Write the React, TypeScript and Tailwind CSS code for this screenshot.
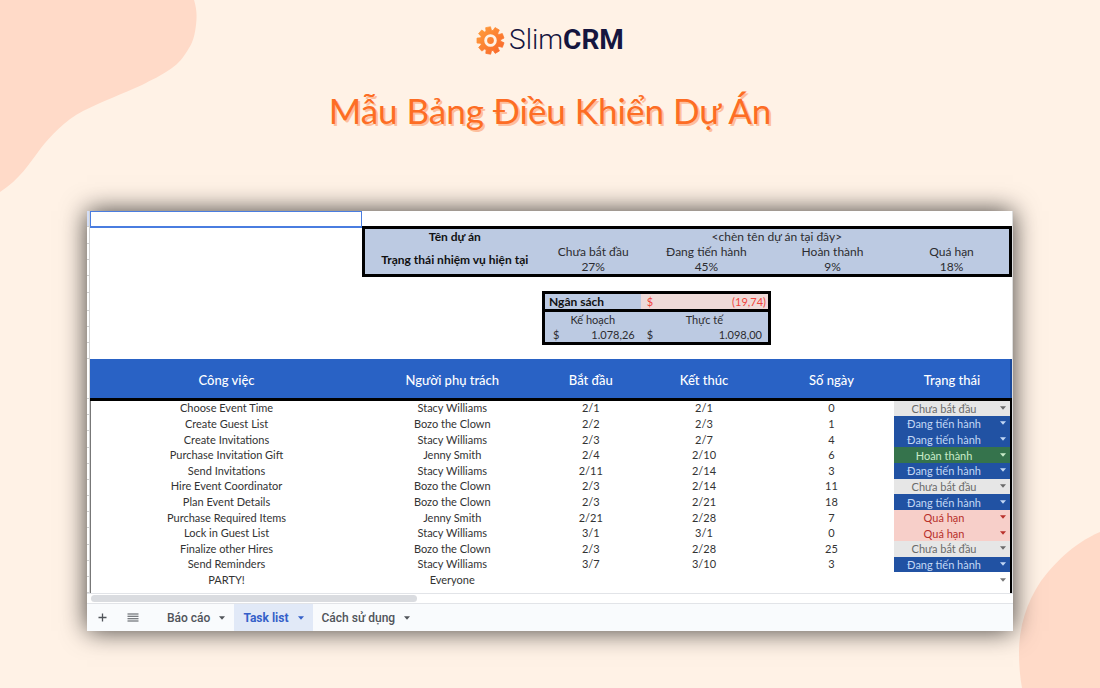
type Status = "" | "Chưa bắt đầu" | "Đang tiến hành" | "Hoàn thành" | "Quá hạn";

const STATUSES: Status[] = ["", "Chưa bắt đầu", "Đang tiến hành", "Hoàn thành", "Quá hạn"];

const STATUS_STYLE: Record<Status, string> = {
  "": "bg-white text-[#777777]",
  "Chưa bắt đầu": "bg-[#e6e6e6] text-[#6a6a6a]",
  "Đang tiến hành": "bg-[#2152a3] text-[#c3d8f5]",
  "Hoàn thành": "bg-[#35734c] text-[#c9ecc9]",
  "Quá hạn": "bg-[#f7cfc9] text-[#b8302b]",
};

const TASKS: [string, string, string, string, string, Status][] = [
  ["Choose Event Time", "Stacy Williams", "2/1", "2/1", "0", "Chưa bắt đầu"],
  ["Create Guest List", "Bozo the Clown", "2/2", "2/3", "1", "Đang tiến hành"],
  ["Create Invitations", "Stacy Williams", "2/3", "2/7", "4", "Đang tiến hành"],
  ["Purchase Invitation Gift", "Jenny Smith", "2/4", "2/10", "6", "Hoàn thành"],
  ["Send Invitations", "Stacy Williams", "2/11", "2/14", "3", "Đang tiến hành"],
  ["Hire Event Coordinator", "Bozo the Clown", "2/3", "2/14", "11", "Chưa bắt đầu"],
  ["Plan Event Details", "Bozo the Clown", "2/3", "2/21", "18", "Đang tiến hành"],
  ["Purchase Required Items", "Jenny Smith", "2/21", "2/28", "7", "Quá hạn"],
  ["Lock in Guest List", "Stacy Williams", "3/1", "3/1", "0", "Quá hạn"],
  ["Finalize other Hires", "Bozo the Clown", "2/3", "2/28", "25", "Chưa bắt đầu"],
  ["Send Reminders", "Stacy Williams", "3/7", "3/10", "3", "Đang tiến hành"],
  ["PARTY!", "Everyone", "", "", "", ""],
];

const HEADERS = ["Công việc", "Người phụ trách", "Bắt đầu", "Kết thúc", "Số ngày", "Trạng thái"];

const TOOTH_COUNT = 9;

function gearPath() {
  const points: string[] = [];
  const step = (Math.PI * 2) / TOOTH_COUNT;
  const corners: [number, number][] = [
    [10.6, -0.27],
    [14.2, -0.18],
    [14.2, 0.18],
    [10.6, 0.27],
  ];
  for (let i = 0; i < TOOTH_COUNT; i++) {
    const base = i * step - Math.PI / 2 - 0.18;
    for (const [r, offset] of corners) {
      const a = base + offset;
      points.push(`${(15 + r * Math.cos(a)).toFixed(2)} ${(15 + r * Math.sin(a)).toFixed(2)}`);
    }
  }
  return `M${points.join("L")}Z`;
}

function Logo() {
  return (
    <div className="flex items-center justify-center gap-1 text-[#15153f]">
      <svg viewBox="0 0 30 30" className="size-[29px]" aria-hidden="true">
        <defs>
          <linearGradient id="gear" x1="0" y1="0" x2="1" y2="1">
            <stop offset="0" stopColor="#ffa03c" />
            <stop offset="1" stopColor="#f9642a" />
          </linearGradient>
        </defs>
        <path d={gearPath()} fill="url(#gear)" stroke="url(#gear)" strokeWidth="0.8" strokeLinejoin="round" />
        <circle cx="15" cy="15" r="5" fill="none" stroke="#fff2e6" strokeWidth="3" />
      </svg>
      <span className="text-[28px] leading-8 font-light">
        Slim<b className="font-bold">CRM</b>
      </span>
    </div>
  );
}

function Caret({ className }: { className: string }) {
  return (
    <svg viewBox="0 0 6 4" className={className} aria-hidden="true">
      <path d="M0 0.3H6L3 3.7Z" fill="currentColor" />
    </svg>
  );
}

function StatusCell({ value, task }: { value: Status; task: string }) {
  return (
    <td className={`border-r-2 border-black p-0 ${STATUS_STYLE[value]}`}>
      <div className="relative">
        <select
          aria-label={`Trạng thái: ${task}`}
          defaultValue={value}
          className="block h-[15px] w-full appearance-none pr-4 text-center leading-[15px] [text-align-last:center]"
        >
          {STATUSES.map((s) => (
            <option key={s} value={s}>
              {s}
            </option>
          ))}
        </select>
        <Caret className="pointer-events-none absolute top-[5px] right-1 h-1 w-1.5" />
      </div>
    </td>
  );
}

const GUTTER = [
  "h-4 bg-[#d3def7]",
  "h-[17px]",
  "h-4",
  "h-4",
  "h-[17px]",
  "h-[18px]",
  "h-4",
  "h-4",
  "h-4",
  "h-10",
];

function RowGutter() {
  return (
    <div className="flex w-[3px] shrink-0 flex-col border-r border-[#d4d4d4]">
      {GUTTER.map((c, i) => (
        <div key={i} className={`shrink-0 border-b border-[#cfcfcf] ${c}`} />
      ))}
      {TASKS.map((t) => (
        <div key={t[0]} className="flex-1 border-b border-[#cfcfcf]" />
      ))}
    </div>
  );
}

function Summary() {
  return (
    <div className="grid grid-cols-[272fr_650fr]">
      <div />
      <table className="w-full table-fixed border-collapse border-[3px] border-black bg-[#bccae2] text-center text-xs leading-[15px] text-[#2c2c30]">
        <colgroup>
          <col className="w-[28%]" />
          <col className="w-[15%]" />
          <col className="w-[20%]" />
          <col className="w-[19%]" />
          <col className="w-[18%]" />
        </colgroup>
        <tbody>
          <tr>
            <th scope="row" className="p-0 font-bold text-[#111111]">Tên dự án</th>
            <td colSpan={4} className="p-0">&lt;chèn tên dự án tại đây&gt;</td>
          </tr>
          <tr>
            <th scope="row" rowSpan={2} className="p-0 font-bold text-[#111111]">Trạng thái nhiệm vụ hiện tại</th>
            <td className="p-0">Chưa bắt đầu</td>
            <td className="p-0">Đang tiến hành</td>
            <td className="p-0">Hoàn thành</td>
            <td className="p-0">Quá hạn</td>
          </tr>
          <tr>
            <td className="p-0">27%</td>
            <td className="p-0">45%</td>
            <td className="p-0">9%</td>
            <td className="p-0">18%</td>
          </tr>
        </tbody>
      </table>
    </div>
  );
}

function Money({ amount, className }: { amount: string; className: string }) {
  return (
    <div className={`flex justify-between ${className}`}>
      <span>$</span>
      <span>{amount}</span>
    </div>
  );
}

function Budget() {
  return (
    <div className="grid grid-cols-[452fr_229fr_241fr]">
      <div />
      <table className="w-full table-fixed border-collapse border-[3px] border-black bg-[#bccae2] text-[11px] leading-[15px] text-[#2c2c30]">
        <colgroup>
          <col className="w-[43%]" />
          <col className="w-[57%]" />
        </colgroup>
        <tbody>
          <tr className="border-b-[3px] border-black">
            <th scope="row" className="p-0 pl-1 text-left text-xs leading-[15px] font-bold text-[#111111]">Ngân sách</th>
            <td className="bg-[#eedad8] p-0 text-[#f0453c]">
              <Money amount="(19,74)" className="pr-0.5 pl-1.5" />
            </td>
          </tr>
          <tr className="text-center">
            <td className="p-0">Kế hoạch</td>
            <td className="p-0">Thực tế</td>
          </tr>
          <tr>
            <td className="p-0">
              <Money amount="1.078,26" className="pr-1.5 pl-2" />
            </td>
            <td className="p-0">
              <Money amount="1.098,00" className="pr-1.5 pl-1.5" />
            </td>
          </tr>
        </tbody>
      </table>
    </div>
  );
}

function TaskTable() {
  return (
    <table className="h-[229px] w-full table-fixed border-collapse text-center text-[11px] leading-[14px] text-[#333333]">
      <colgroup>
        <col className="w-[29.5%]" />
        <col className="w-[19.6%]" />
        <col className="w-[10.5%]" />
        <col className="w-[14.1%]" />
        <col className="w-[13.6%]" />
        <col className="w-[12.7%]" />
      </colgroup>
      <thead>
        <tr className="h-10 border-b-[3px] border-black bg-[#2962c5] text-[13px] text-white">
          {HEADERS.map((h) => (
            <th
              key={h}
              scope="col"
              className="p-0 pt-1 font-medium first:border-l first:border-l-[#2962c5] last:border-r-2 last:border-r-[#1b4a9c]"
            >
              {h}
            </th>
          ))}
        </tr>
      </thead>
      <tbody>
        {TASKS.map(([task, owner, start, end, days, status]) => (
          <tr key={task}>
            <td className="border-l border-[#777777] p-0">{task}</td>
            <td className="p-0">{owner}</td>
            <td className="p-0">{start}</td>
            <td className="p-0">{end}</td>
            <td className="p-0">{days}</td>
            <StatusCell value={status} task={task} />
          </tr>
        ))}
      </tbody>
    </table>
  );
}

function SheetTab({ label, active = false }: { label: string; active?: boolean }) {
  return (
    <button
      type="button"
      className={`flex items-center gap-[9px] px-[9px] ${active ? "bg-[#e1e9f7] font-bold text-[#3560c9]" : "font-medium text-[#50545a]"}`}
    >
      {label}
      <Caret className="h-1 w-1.5" />
    </button>
  );
}

function TabBar() {
  return (
    <div className="flex h-7 border-t border-[#e2e4e8] bg-[#f9fbfd] font-['Roboto','Noto_Sans',sans-serif] text-xs text-[#50545a]">
      <button type="button" aria-label="Thêm trang tính" className="flex w-[30px] items-center justify-center">
        <svg viewBox="0 0 9 9" className="size-[9px]" aria-hidden="true">
          <path d="M4.5 0.5V8.5M0.5 4.5H8.5" stroke="currentColor" strokeWidth="1.3" />
        </svg>
      </button>
      <button type="button" aria-label="Tất cả trang tính" className="flex w-8 items-center justify-center">
        <svg viewBox="0 0 12 9" className="h-[9px] w-3" aria-hidden="true">
          <path d="M0.5 1H11.5M0.5 3.3H11.5M0.5 5.7H11.5M0.5 8H11.5" stroke="currentColor" strokeWidth="1.1" />
        </svg>
      </button>
      <div className="ml-[9px] flex">
        <SheetTab label="Báo cáo" />
        <SheetTab label="Task list" active />
        <SheetTab label="Cách sử dụng" />
      </div>
    </div>
  );
}

function Sheet() {
  return (
    <section className="bg-white font-['Lato','Noto_Sans',sans-serif] shadow-[0_0_24px_rgba(0,0,0,0.75)]">
      <div className="flex">
        <RowGutter />
        <div className="min-w-0 flex-1 border-r border-[#dddddd]">
          <div className="grid h-[15px] grid-cols-[272fr_650fr]">
            <div className="relative">
              <div className="absolute inset-x-0 top-0 -bottom-[2px] border border-b-2 border-[#4a7de0]" />
            </div>
            <div />
          </div>
          <Summary />
          <div className="h-[14px]" />
          <Budget />
          <div className="h-[14px]" />
          <TaskTable />
          <div className="h-[5px] border-r-2 border-l border-r-black border-l-[#777777]" />
        </div>
      </div>
      <div className="border-t border-[#e2e4e8] py-px pl-1">
        <div className="h-[7px] w-[35.4%] rounded-full bg-[#dadce0]" />
      </div>
      <TabBar />
    </section>
  );
}

function Backdrop() {
  return (
    <>
      <svg viewBox="0 0 200 195" className="absolute top-0 left-0 h-[195px] w-[200px]" aria-hidden="true">
        <path
          d="M0 0H194C197 10 197 17 196 25C195 34 193 42 189 48C184 57 178 64 172 68C161 76 151 80 142 85C122 94 103 101 83 111C65 120 50 137 41 148C29 164 20 179 0 192Z"
          fill="#ffdac8"
        />
      </svg>
      <svg viewBox="0 0 81 156" className="absolute right-0 bottom-0 h-[156px] w-[81px]" aria-hidden="true">
        <path d="M81 0C53 12 34 33 22 49C7 71 0 96 0 120Q0 140 3 156H81Z" fill="#ffdac8" />
      </svg>
    </>
  );
}

export default function App() {
  return (
    <div className="relative min-h-screen overflow-hidden bg-[#fff2e6]">
      <Backdrop />
      <main className="relative px-[87px] pt-6 pb-14">
        <header className="text-center font-['Roboto','Noto_Sans',sans-serif]">
          <Logo />
          <h1 className="mt-[30px] font-['Lato','Noto_Sans',sans-serif] text-[35px] leading-[48px] text-[#fd6d24] [text-shadow:2px_2px_0_#fdbf9d]">
            Mẫu Bảng Điều Khiển Dự Án
          </h1>
        </header>
        <div className="mt-[77px]">
          <Sheet />
        </div>
      </main>
    </div>
  );
}
